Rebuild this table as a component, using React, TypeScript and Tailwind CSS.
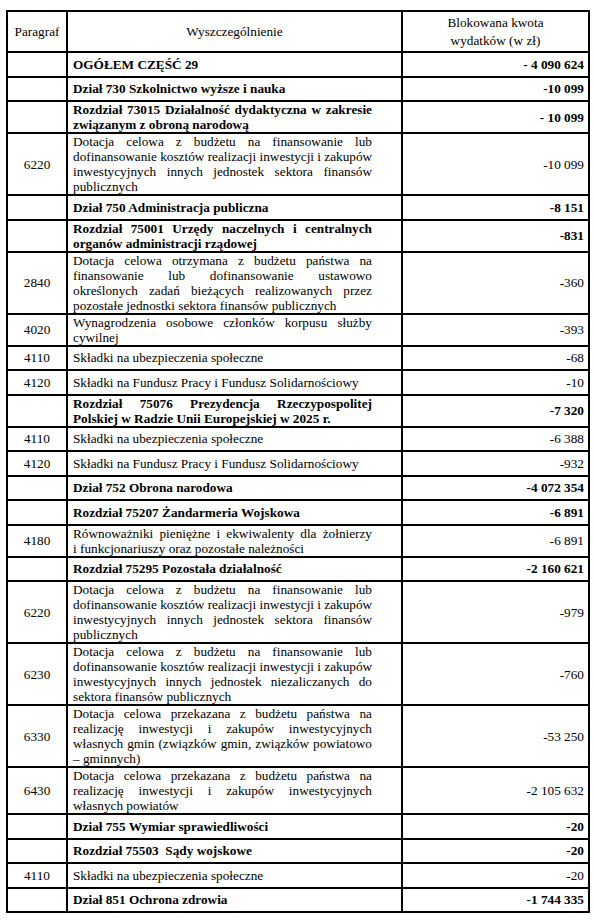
import React from 'react';

type Row = {
  p?: string;
  lines: string[];
  amount: string;
  bold?: boolean;
};

const rows: Row[] = [
  { lines: ['OGÓŁEM CZĘŚĆ 29'], amount: '- 4 090 624', bold: true },
  { lines: ['Dział 730 Szkolnictwo wyższe i nauka'], amount: '-10 099', bold: true },
  {
    lines: ['Rozdział 73015 Działalność dydaktyczna w zakresie', 'związanym z obroną narodową'],
    amount: '- 10 099',
    bold: true,
  },
  {
    p: '6220',
    lines: [
      'Dotacja celowa z budżetu na finansowanie lub',
      'dofinansowanie kosztów realizacji inwestycji i zakupów',
      'inwestycyjnych innych jednostek sektora finansów',
      'publicznych',
    ],
    amount: '-10 099',
  },
  { lines: ['Dział 750 Administracja publiczna'], amount: '-8 151', bold: true },
  {
    lines: ['Rozdział 75001 Urzędy naczelnych i centralnych', 'organów administracji rządowej'],
    amount: '-831',
    bold: true,
  },
  {
    p: '2840',
    lines: [
      'Dotacja celowa otrzymana z budżetu państwa na',
      'finansowanie lub dofinansowanie ustawowo',
      'określonych zadań bieżących realizowanych przez',
      'pozostałe jednostki sektora finansów publicznych',
    ],
    amount: '-360',
  },
  { p: '4020', lines: ['Wynagrodzenia osobowe członków korpusu służby', 'cywilnej'], amount: '-393' },
  { p: '4110', lines: ['Składki na ubezpieczenia społeczne'], amount: '-68' },
  { p: '4120', lines: ['Składki na Fundusz Pracy i Fundusz Solidarnościowy'], amount: '-10' },
  {
    lines: ['Rozdział 75076 Prezydencja Rzeczypospolitej', 'Polskiej w Radzie Unii Europejskiej w 2025 r.'],
    amount: '-7 320',
    bold: true,
  },
  { p: '4110', lines: ['Składki na ubezpieczenia społeczne'], amount: '-6 388' },
  { p: '4120', lines: ['Składki na Fundusz Pracy i Fundusz Solidarnościowy'], amount: '-932' },
  { lines: ['Dział 752 Obrona narodowa'], amount: '-4 072 354', bold: true },
  { lines: ['Rozdział 75207 Żandarmeria Wojskowa'], amount: '-6 891', bold: true },
  {
    p: '4180',
    lines: ['Równoważniki pieniężne i ekwiwalenty dla żołnierzy', 'i funkcjonariuszy oraz pozostałe należności'],
    amount: '-6 891',
  },
  { lines: ['Rozdział 75295 Pozostała działalność'], amount: '-2 160 621', bold: true },
  {
    p: '6220',
    lines: [
      'Dotacja celowa z budżetu na finansowanie lub',
      'dofinansowanie kosztów realizacji inwestycji i zakupów',
      'inwestycyjnych innych jednostek sektora finansów',
      'publicznych',
    ],
    amount: '-979',
  },
  {
    p: '6230',
    lines: [
      'Dotacja celowa z budżetu na finansowanie lub',
      'dofinansowanie kosztów realizacji inwestycji i zakupów',
      'inwestycyjnych innych jednostek niezaliczanych do',
      'sektora finansów publicznych',
    ],
    amount: '-760',
  },
  {
    p: '6330',
    lines: [
      'Dotacja celowa przekazana z budżetu państwa na',
      'realizację inwestycji i zakupów inwestycyjnych',
      'własnych gmin (związków gmin, związków powiatowo',
      '– gminnych)',
    ],
    amount: '-53 250',
  },
  {
    p: '6430',
    lines: [
      'Dotacja celowa przekazana z budżetu państwa na',
      'realizację inwestycji i zakupów inwestycyjnych',
      'własnych powiatów',
    ],
    amount: '-2 105 632',
  },
  { lines: ['Dział 755 Wymiar sprawiedliwości'], amount: '-20', bold: true },
  { lines: ['Rozdział 75503  Sądy wojskowe'], amount: '-20', bold: true },
  { p: '4110', lines: ['Składki na ubezpieczenia społeczne'], amount: '-20' },
  { lines: ['Dział 851 Ochrona zdrowia'], amount: '-1 744 335', bold: true },
];

// lines are kept as in the source PDF; every line but the last is stretched (justify)
const Lines: React.FC<{ lines: string[] }> = ({ lines }) => (
  <>
    {lines.map((line, i) => {
      const last = i === lines.length - 1;
      return (
        <div
          key={i}
          className={
            last
              ? 'whitespace-pre text-left'
              : 'whitespace-pre text-justify [text-align-last:justify]'
          }
        >
          {line}
        </div>
      );
    })}
  </>
);

export default function App() {
  return (
    <div className="min-h-screen bg-white pl-[6px] pt-[10px] [font-family:'Liberation_Serif','Times_New_Roman',serif] text-[13.25px] text-black">
      <table className="w-[582px] table-fixed border-collapse">
        <colgroup>
          <col className="w-[60px]" />
          <col className="w-[335px]" />
          <col className="w-[187px]" />
        </colgroup>
        <thead>
          <tr className="h-[41px]">
            <th className="border-2 border-black text-center align-middle font-normal">Paragraf</th>
            <th className="border-2 border-black text-center align-middle font-normal">Wyszczególnienie</th>
            <th className="border-2 border-black text-center align-middle font-normal leading-[18px]">
              Blokowana kwota
              <br />
              wydatków (w zł)
            </th>
          </tr>
        </thead>
        <tbody className="leading-[15px]">
          {rows.map((r, i) => (
            <tr key={i} className="h-[24.5px]">
              <td className="border-2 border-black text-center align-middle">{r.p ?? ''}</td>
              <td className={`border-2 border-black py-0 pl-[5px] pr-[29px] align-middle ${r.bold ? 'font-bold' : ''}`}>
                <Lines lines={r.lines} />
              </td>
              <td className={`border-2 border-black pr-[4px] text-right align-middle ${r.bold ? 'font-bold' : ''}`}>
                {r.amount}
              </td>
            </tr>
          ))}
        </tbody>
      </table>
    </div>
  );
}
